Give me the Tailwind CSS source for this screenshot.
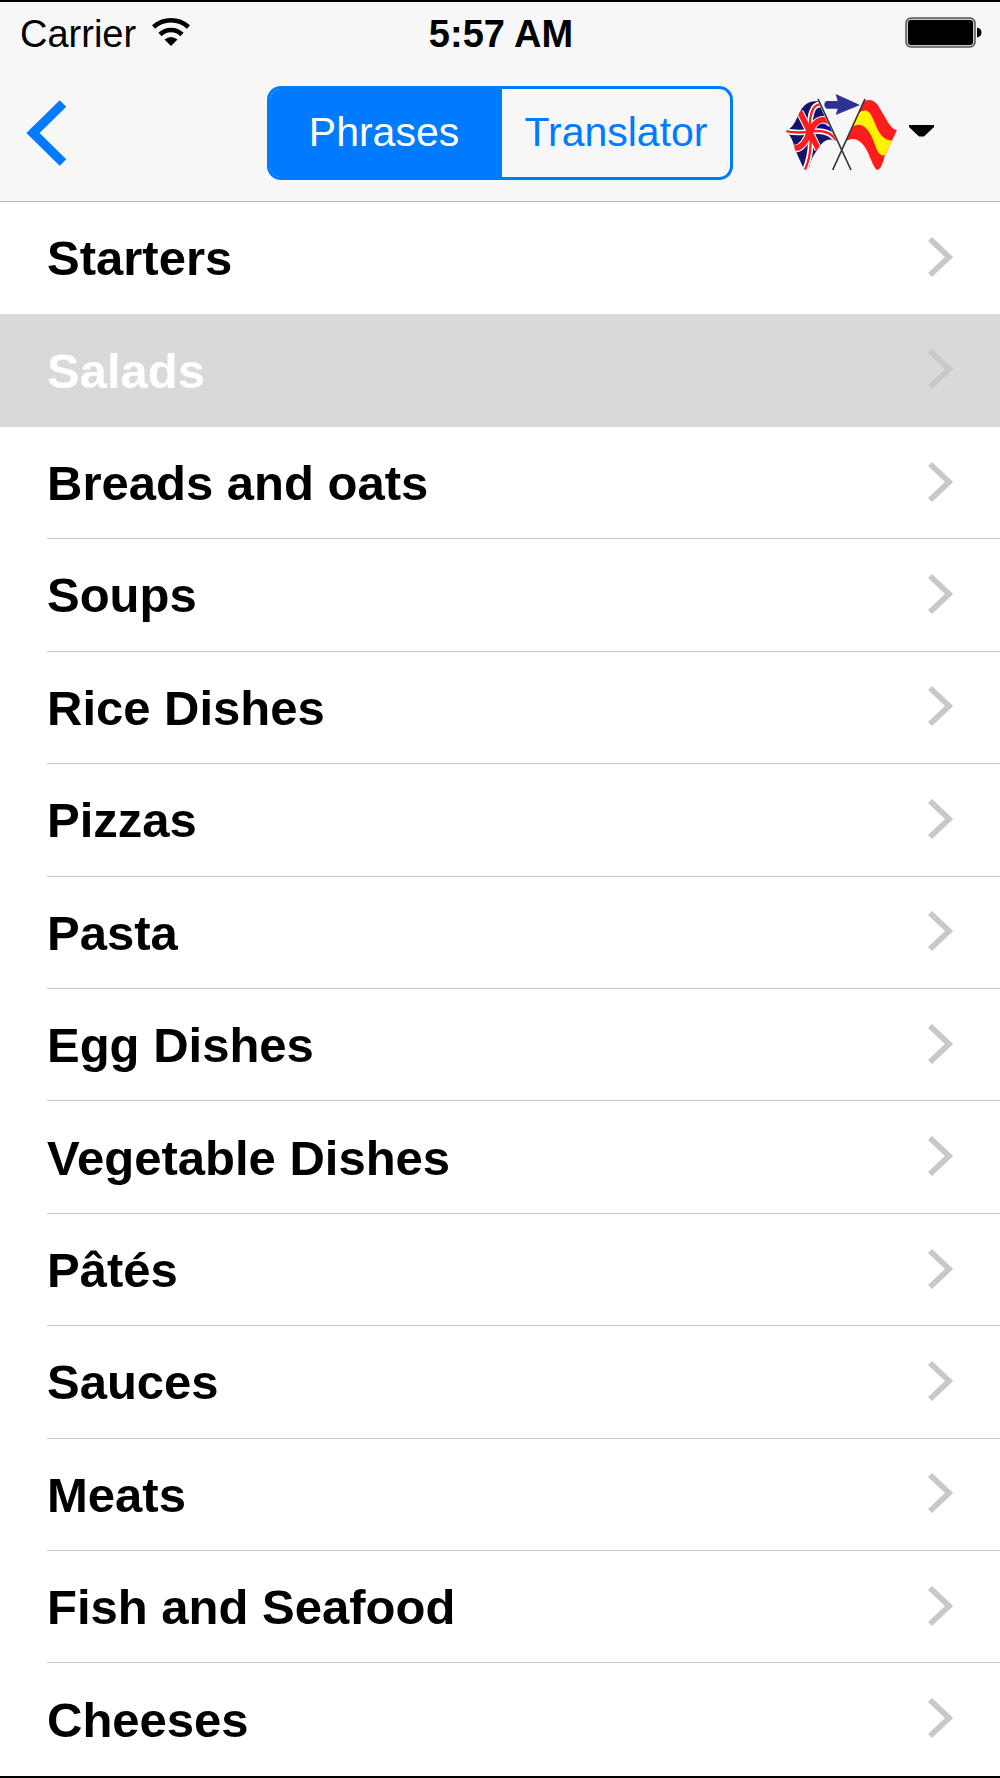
<!DOCTYPE html>
<html lang="en">
<head>
  <meta charset="UTF-8" />
  <title>Phrases</title>
  <meta name="viewport" content="width=device-width, initial-scale=1.0" />
  <!-- Tailwind CSS CDN -->
  <script src="https://cdn.jsdelivr.net/npm/@tailwindcss/browser@4"></script>
</head>
<body class="bg-white">
  <div class="min-h-screen flex flex-col border-y-2 border-black text-black font-['Liberation_Sans',Arial,sans-serif]">

    <header class="bg-[#f7f7f7] border-b border-[#b9b9b9]">
      <!-- Status bar -->
      <div class="grid grid-cols-[1fr_auto_1fr] items-center h-16 pl-5 pr-[18px] text-[38px] leading-none">
        <div class="flex items-center gap-4">
          <span>Carrier</span>
          <svg class="w-[38px] h-[28px] -mt-1" viewBox="0 0 38 28" fill="none" stroke="#000" stroke-width="4.6" aria-label="Wi-Fi">
            <path d="M1.500 9Q9 2.300 19 2.300T36.500 9" />
            <path d="M8 16.500Q12.500 12 19 12T30 16.500" />
            <path d="M12.500 21.500Q19 16.500 25.500 21.500L19 28Z" fill="#000" stroke="none" />
          </svg>
        </div>
        <time class="font-bold">5:57 AM</time>
        <svg class="w-[77px] h-[31px] -mt-1 justify-self-end" viewBox="0 0 77 31" aria-label="Battery full">
          <rect x="1" y="1" width="69" height="29" rx="5" fill="#c9c9c9" stroke="#555" stroke-width="1.5" />
          <rect x="3" y="3" width="65" height="25" rx="3" />
          <path d="M72 10.500Q76.500 11.500 76.500 15.500T72 20.500Z" />
        </svg>
      </div>

      <!-- Navigation bar -->
      <nav class="grid grid-cols-[1fr_auto_1fr] items-center h-[135px] px-6 pb-0.5">
        <button type="button" aria-label="Back" class="justify-self-start">
          <svg class="w-[44px] h-[66px]" viewBox="0 0 44 66" fill="none" stroke="#007aff" stroke-width="9.3">
            <path d="M39 3.500L9 33L39 62.500" />
          </svg>
        </button>
        <div role="tablist" class="flex w-[466px] h-[94px] rounded-[14px] border-3 border-[#007aff] overflow-hidden text-[41px] leading-none">
          <button type="button" role="tab" aria-selected="true" class="w-[232px] pr-1 bg-[#007aff] text-white">Phrases</button>
          <button type="button" role="tab" aria-selected="false" class="flex-1 text-[#007aff]">Translator</button>
        </div>
        <button type="button" aria-label="English to Spanish" class="justify-self-end flex items-center gap-3 mr-[42px]">
          <svg class="w-[112px] h-[80px]" viewBox="45 39 336 240" fill="none">
            <clipPath id="ukFlag">
              <path d="M47 153Q68 146 82 112Q102 58 143 64L198 182Q166 168 144 206Q121 238 118 260Q112 272 102 268Q88 238 75 208Q68 170 47 153Z" />
            </clipPath>
            <g clip-path="url(#ukFlag)">
              <rect x="45" y="50" width="160" height="225" fill="#14146b" />
              <path d="M120 155Q150 128 198 152" stroke="#0000a0" stroke-width="12" />
              <g stroke="#fff">
                <path d="M89 95L119 155L145 208M68 205Q98 212 119 155Q148 98 184 132" stroke-width="23" />
                <path d="M152 74Q118 70 119 155Q129 215 104 272M44 153Q75 160 119 156Q175 144 200 182" stroke-width="17" />
              </g>
              <g stroke="#ff1c1c">
                <path d="M89 95L119 155L145 208M68 203Q98 212 119 155Q148 98 186 132" stroke-width="17" />
                <path d="M152 74Q118 70 119 155Q129 215 104 272M44 153Q75 160 119 156Q175 144 200 182" stroke-width="7" />
              </g>
            </g>
            <path d="M281 64Q306 52 323 74L346 113Q366 151 381 150L344 229Q334 270 321 270Q313 265 301 235Q273 160 229 182Z" fill="#ff1c1c" />
            <path d="M264 100Q290 80 305 108L324 151Q342 184 367 181L345 226Q325 230 315 194Q287 116 248 140Z" fill="#fff200" />
            <path d="M144 57L243 270M285 57L188 270" stroke="#333" stroke-width="5" />
            <path d="M170 63H203L197 42L270 75L197 105L203 86H170Q163 84 163 75Q163 65 170 63Z" fill="#2e3192" />
          </svg>
          <svg class="w-[25px] h-[12px] -mt-1" viewBox="0 0 25 12">
            <path d="M0 0H25V2L15 11.500H10L0 2Z" />
          </svg>
        </button>
      </nav>
    </header>

    <ul id="categoryList" class="flex-1 flex flex-col text-[49px] leading-none font-bold"></ul>
  </div>

  <script>
    const categories = [
      "Starters", "Salads", "Breads and oats", "Soups", "Rice Dishes",
      "Pizzas", "Pasta", "Egg Dishes", "Vegetable Dishes", "Pâtés",
      "Sauces", "Meats", "Fish and Seafood", "Cheeses"
    ];
    const selected = "Salads";

    document.getElementById("categoryList").innerHTML = categories.map((name, i) => {
      const active = name === selected;
      // no separator next to the selected row or under the last one
      const line = active || categories[i + 1] === selected || i === categories.length - 1
        ? "border-transparent" : "border-[#c8c7cc]";
      return `
        <li class="flex-1 flex pl-[47px] ${active ? "bg-[#d9d9d9] text-white" : ""}">
          <a href="#" class="flex-1 flex items-center justify-between pt-[30px] pb-7 pr-[47px] border-b ${line}">
            <span>${name}</span>
            <svg class="w-[26px] h-[42px] -mt-1" viewBox="0 0 26 42" fill="none" stroke="#c7c7cc" stroke-width="5.8" aria-hidden="true">
              <path d="M3 3L22 21L3 39" />
            </svg>
          </a>
        </li>
      `;
    }).join("");
  </script>
</body>
</html>
